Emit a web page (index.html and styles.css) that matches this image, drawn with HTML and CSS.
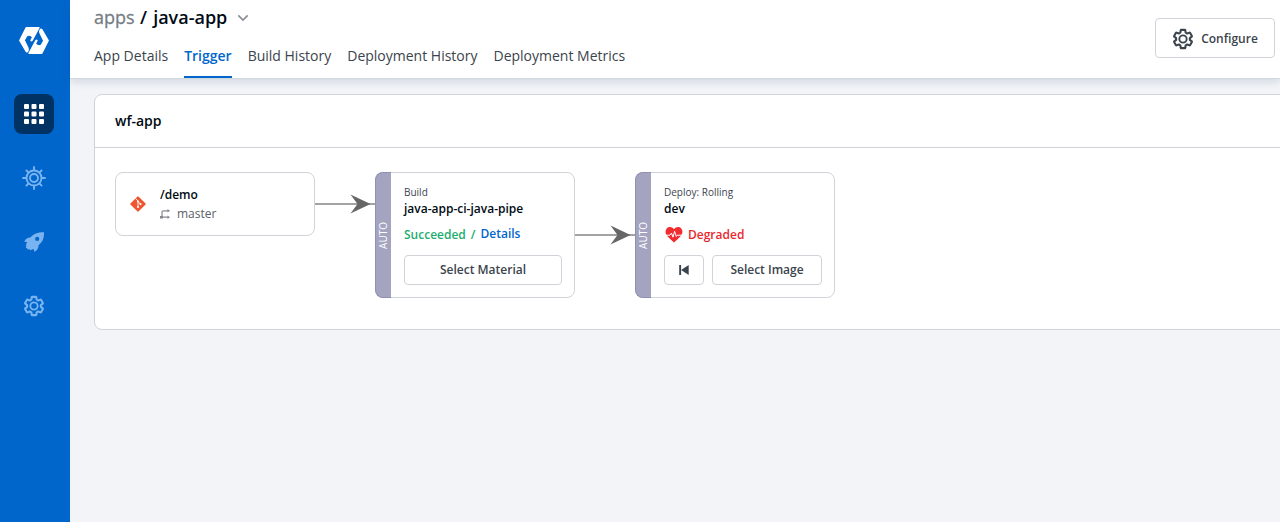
FILE: index.html
```html
<!DOCTYPE html>
<html lang="en">
<head>
<meta charset="utf-8">
<title>java-app - Trigger</title>
<link rel="stylesheet" href="styles.css">
</head>
<body>
<svg class="defs" aria-hidden="true">
  <symbol id="gear" viewBox="0 0 24 24">
    <path fill="none" stroke="currentColor" stroke-width="2.300" stroke-linejoin="round" d="M19.43 12.98c.04-.32.07-.64.07-.98 0-.34-.03-.66-.07-.98l2.11-1.65c.19-.15.24-.42.12-.64l-2-3.46c-.09-.16-.26-.25-.44-.25-.06 0-.12.01-.17.03l-2.49 1c-.52-.4-1.08-.73-1.69-.98l-.38-2.65C14.46 2.18 14.25 2 14 2h-4c-.25 0-.46.18-.49.42l-.38 2.65c-.61.25-1.17.59-1.69.98l-2.49-1c-.06-.02-.12-.03-.18-.03-.17 0-.34.09-.43.25l-2 3.46c-.13.22-.07.49.12.64l2.11 1.65c-.04.32-.07.65-.07.98s.03.66.07.98l-2.11 1.65c-.19.15-.24.42-.12.64l2 3.46c.09.16.26.25.44.25.06 0 .12-.01.17-.03l2.49-1c.52.4 1.08.73 1.69.98l.38 2.65c.03.24.24.42.49.42h4c.25 0 .46-.18.49-.42l.38-2.65c.61-.25 1.17-.59 1.69-.98l2.49 1c.06.02.12.03.18.03.17 0 .34-.09.43-.25l2-3.46c.12-.22.07-.49-.12-.64z"/>
    <circle cx="12" cy="12" r="4" fill="none" stroke="currentColor" stroke-width="2"/>
  </symbol>
</svg>
<div class="app">
  <nav class="sidebar">
    <svg class="logo" viewBox="57 80 91 82" width="30" height="27" fill="#fff">
      <path d="M80 80H118Q121 80 119 84L99 121Q94 127 91 121L96 111Q89 104 82 108L75 120L85 141Q89 148 86 154Q81 161 77 155L57 121L76 83Q77 80 80 80Z"/>
      <path d="M125 162H87Q84 162 86 158L106 121Q111 115 114 121L109 131Q116 138 123 134L130 122L120 101Q116 94 119 88Q124 81 128 87L148 121L129 159Q128 162 125 162Z"/>
    </svg>
    <a class="nav-item active">
      <svg viewBox="0 0 20 20" width="20" height="20" fill="#fff">
        <rect width="5" height="5" rx="1"/><rect x="7.5" width="5" height="5" rx="1"/><rect x="15" width="5" height="5" rx="1"/>
        <rect y="7.5" width="5" height="5" rx="1"/><rect x="7.5" y="7.5" width="5" height="5" rx="1"/><rect x="15" y="7.5" width="5" height="5" rx="1"/>
        <rect y="15" width="5" height="5" rx="1"/><rect x="7.5" y="15" width="5" height="5" rx="1"/><rect x="15" y="15" width="5" height="5" rx="1"/>
      </svg>
    </a>
    <a class="nav-item">
      <svg viewBox="0 0 24 24" width="24" height="24" fill="none" stroke="currentColor" stroke-linecap="round">
        <circle cx="12" cy="12" r="7.5" stroke-width="1.900"/><circle cx="12" cy="12" r="4" stroke-width="1.900"/>
        <path stroke-width="1.900" d="M12 4V1M12 23v-3M4 12H1M23 12h-3M6.500 6.500L4.400 4.400M17.500 6.500l2.100-2.100M6.500 17.500l-2.100 2.100M17.500 17.500l2.100 2.100"/>
      </svg>
    </a>
    <a class="nav-item">
      <svg viewBox="0 0 20 20" width="20" height="20" fill="currentColor">
        <path fill-rule="evenodd" d="M20 .2C14 .1 9.500 1.600 6.400 5.600C3.800 5.500 1.700 7 .2 9.700L3.100 10.100L1.800 13.500L2.500 14.300Q.8 16 3.200 16.200Q3.400 18.100 5.300 17L6 18.200L9.600 16.900L10.400 19.800C13.200 18.200 14.700 15.900 14.500 13.200C18.700 10 20.300 5.600 20 .2ZM13.200 4.800a2.100 2.100 0 1 1 0 4.200a2.100 2.100 0 0 1 0-4.200Z"/>
      </svg>
    </a>
    <a class="nav-item"><svg width="22" height="22"><use href="#gear"/></svg></a>
  </nav>
  <div class="page">
    <header class="header">
      <div>
        <div class="breadcrumb">
          <span class="muted">apps</span><span class="slash">/</span><span>java-app</span>
          <svg class="chevron" viewBox="0 0 12 8" width="12" height="8" fill="none" stroke="#8b8f94" stroke-width="1.7"><path d="M1.300 1.300L6 6L10.700 1.300"/></svg>
        </div>
        <div class="tabs">
          <a class="tab">App Details</a><a class="tab selected">Trigger</a><a class="tab">Build History</a><a class="tab">Deployment History</a><a class="tab">Deployment Metrics</a>
        </div>
      </div>
      <button class="btn configure"><svg width="22" height="22"><use href="#gear"/></svg><span>Configure</span></button>
    </header>
    <main class="content">
      <section class="workflow">
        <h2 class="workflow-title">wf-app</h2>
        <div class="canvas">
          <svg class="edges" width="760" height="180">
            <g stroke="#858585" stroke-width="1.600"><path d="M220 56H280M480 87H540"/></g>
            <g fill="#666"><path d="M255.500 46.500L275.500 56L255.500 65.500L262.500 56Z"/><path d="M515.500 77.500L535.500 87L515.500 96.500L522.500 87Z"/></g>
          </svg>
          <div class="node source">
            <svg class="git" viewBox="0 0 16 16" width="16" height="16"><rect x="2.300" y="2.300" width="11.400" height="11.400" rx="1" transform="rotate(45 8 8)" fill="#ee5530"/><path d="M5.500 2.500L8 5V11M8 5.500L10.500 8" fill="none" stroke="#fff" stroke-width=".9"/><g fill="#fff"><circle cx="8" cy="5.500" r="1.100"/><circle cx="8" cy="11" r="1.100"/><circle cx="10.500" cy="8.100" r="1.100"/></g></svg>
            <div class="source-text">
              <div class="name">/demo</div>
              <div class="branch"><svg viewBox="0 0 11 10" width="11" height="10"><path d="M8 1.800H3.300Q2 1.800 2 3.200V8.200H8" fill="none" stroke="#85898e" stroke-width="1.200"/><path d="M7.500 0L10 1.800L7.500 3.600ZM7.500 6.400L10 8.200L7.500 10ZM0 7h3v2.400H0Z" fill="#85898e"/></svg><span>master</span></div>
            </div>
          </div>
          <div class="node stage build">
            <div class="auto"><span>AUTO</span></div>
            <div class="stage-body">
              <div class="kind">Build</div>
              <div class="name">java-app-ci-java-pipe</div>
              <div class="status ok"><span>Succeeded</span><span class="divider">/</span><a class="details">Details</a></div>
              <div class="actions"><button class="btn grow">Select Material</button></div>
            </div>
          </div>
          <div class="node stage deploy">
            <div class="auto"><span>AUTO</span></div>
            <div class="stage-body">
              <div class="kind">Deploy: Rolling</div>
              <div class="name">dev</div>
              <div class="status bad">
                <svg viewBox="0 0 20 18" width="20" height="18"><path fill="#f02c30" d="M10 3.300C12 .5 15.500.5 17.200 2.500C19.300 5 18.500 8 16.500 10.300Q14 13.300 10 16.500Q6 13.300 3.500 10.300C1.500 8 .7 5 2.800 2.500C4.500.5 8 .5 10 3.300Z"/><path fill="none" stroke="#fff" stroke-width="1" stroke-linejoin="round" d="M2 9.200H6L7.500 7L9 11.200L10.600 5.300L12.300 10.500L13.300 9.200H18"/></svg>
                <span>Degraded</span>
              </div>
              <div class="actions">
                <button class="btn rollback"><svg viewBox="0 0 10 10" width="10" height="10" fill="#3b444c"><path d="M.2 0H2.100V10H.2ZM9.700 0V10L2.100 5Z"/></svg></button>
                <button class="btn grow">Select Image</button>
              </div>
            </div>
          </div>
        </div>
      </section>
    </main>
  </div>
</div>
</body>
</html>
```
FILE: styles.css
```css
* { box-sizing: border-box; }
body { margin: 0; font-family: "Open Sans", "Noto Sans", sans-serif; color: #000a14; overflow: hidden; }
svg { display: block; flex: none; }
.defs { position: absolute; width: 0; height: 0; }
.app { display: flex; height: 522px; background: #f2f4f7; overflow: hidden; }
.sidebar { width: 70px; flex: none; background: #0066cc; color: #79b4f0; padding: 27px 0 0 14px; }
.logo { margin: 0 0 40px 5px; }
.nav-item { display: flex; align-items: center; justify-content: center; width: 40px; height: 40px; margin-bottom: 24px; border-radius: 8px; }
.nav-item.active { background: #003264; }
.page { flex: 1; min-width: 0; }
.header { position: relative; display: flex; justify-content: space-between; height: 78px; padding: 0 5px 0 24px; background: #fff; box-shadow: 0 1px 0 #d0d9e2, 0 4px 8px rgba(21, 60, 100, .14); }
.breadcrumb { display: flex; align-items: center; height: 36px; padding-bottom: 2px; font-size: 18px; line-height: 34px; font-weight: 600; }
.muted { color: #767d84; font-weight: 400; -webkit-text-stroke: .3px #767d84; margin-right: .5px; }
.slash { margin: 0 6px 0 5px; }
.chevron { margin: 2px 0 0 10px; }
.tabs { display: flex; gap: 16px; height: 42px; }
.tab { font-size: 14px; line-height: 20px; padding-top: 10px; color: #3b444c; white-space: nowrap; }
.tab.selected { color: #0066cc; font-weight: 600; border-bottom: 2px solid #0066cc; }
.btn { display: flex; align-items: center; justify-content: center; height: 30px; padding: 0; font: 600 12px/18px "Open Sans", sans-serif; color: #3b444c; background: #fff; border: 1px solid #d0d4d9; border-radius: 4px; }
.configure { width: 120px; height: 40px; margin-top: 18px; padding-top: 2px; gap: 7px; }
.content { padding: 16px 0 0 24px; }
.workflow { width: 1210px; height: 236px; background: #fff; border: 1px solid #d0d4d9; border-radius: 8px; }
.workflow-title { margin: 0; height: 53px; padding-left: 20px; font-size: 14px; line-height: 52px; font-weight: 600; border-bottom: 1px solid #d0d4d9; }
.canvas { position: relative; height: 180px; }
.edges { position: absolute; left: 0; top: 0; }
.node { position: absolute; width: 200px; display: flex; background: #fff; border: 1px solid #d0d4d9; border-radius: 8px; }
.source { left: 20px; top: 24px; height: 64px; padding-left: 14px; align-items: center; gap: 14px; }
.source-text { padding-top: 2px; }
.build { left: 280px; top: 24px; }
.deploy { left: 540px; top: 24px; }
.name { font-size: 12px; line-height: 18px; font-weight: 600; }
.branch { display: flex; align-items: center; gap: 6px; font-size: 12px; line-height: 20px; color: #596168; }
.stage { height: 126px; }
.auto { width: 16px; flex: none; margin: -1px 0 -1px -1px; padding-right: 1px; background: #a4a4c1; border: 1px solid #9090b3; border-right: 0; border-radius: 8px 0 0 8px; display: flex; align-items: center; justify-content: center; color: #fff; font-size: 10px; line-height: 14px; }
.auto span { writing-mode: vertical-rl; transform: rotate(180deg); }
.stage-body { flex: 1; padding: 12px 12px 12px 13px; }
.kind { height: 15px; font-size: 10px; line-height: 14px; color: #3b444c; }
.status { display: flex; align-items: center; height: 20px; margin: 7px 0 10px; font-size: 12px; line-height: 20px; font-weight: 600; }
.ok { color: #1dad70; }
.divider { margin: 0 5px; }
.details { color: #0066cc; position: relative; top: -1px; }
.bad { color: #e8292e; gap: 4px; }
.actions { display: flex; gap: 8px; }
.grow { flex: 1; }
.rollback { width: 40px; }
```
